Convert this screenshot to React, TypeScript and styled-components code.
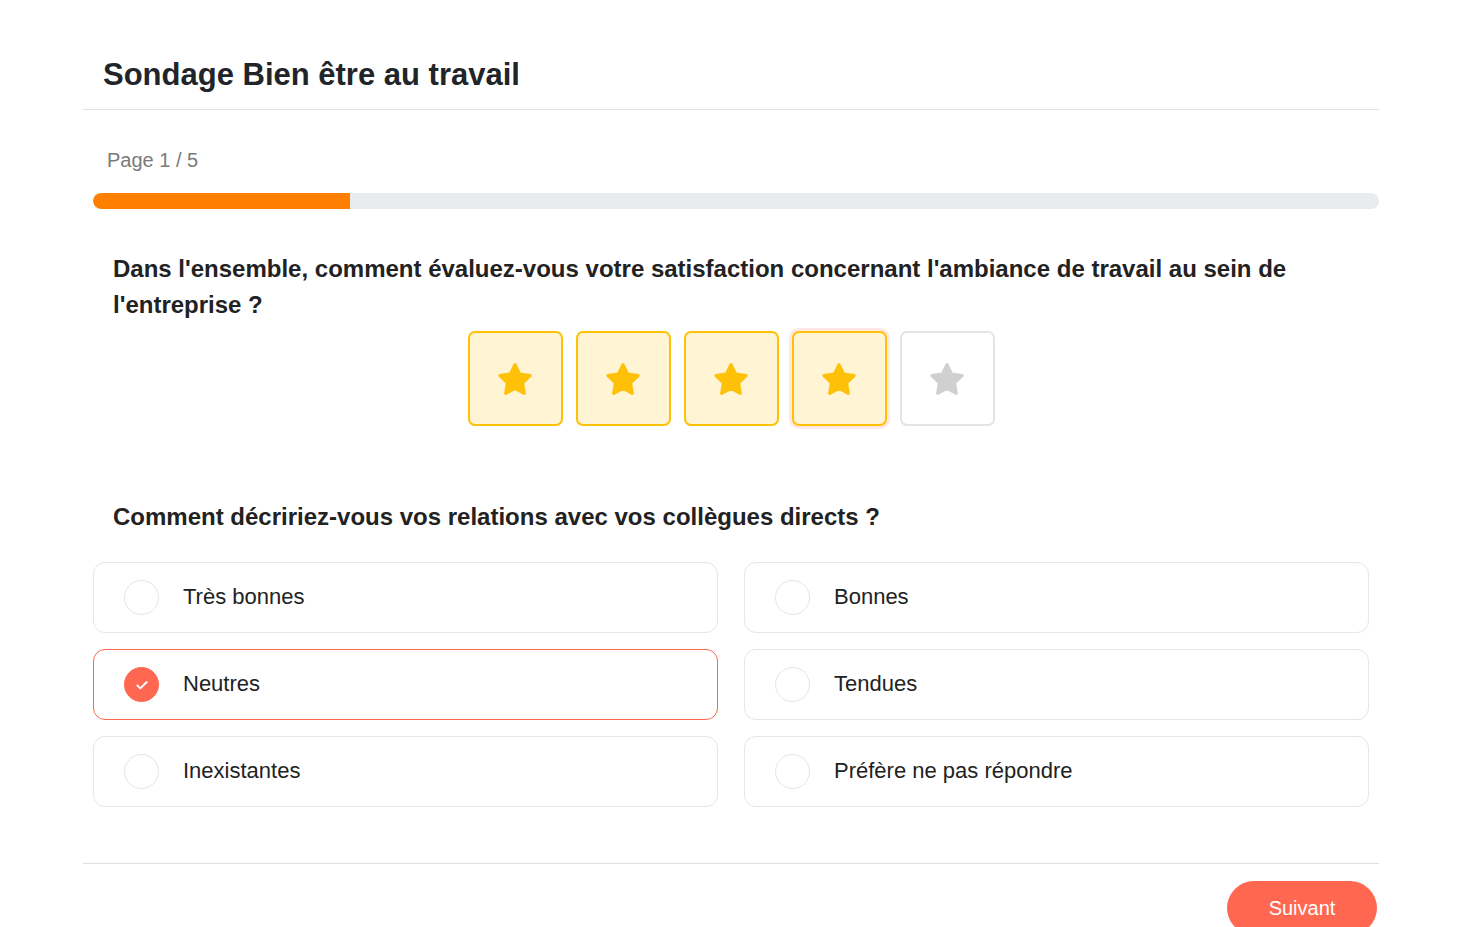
import styled, { createGlobalStyle, css } from 'styled-components';

const GlobalStyle = createGlobalStyle`
  * {
    box-sizing: border-box;
  }

  body {
    margin: 0;
    background: #ffffff;
    font-family: "Liberation Sans", Arial, sans-serif;
    color: #222222;
  }
`;

const STARS = 5;
const RATING = 4;

const options = [
  { label: 'Très bonnes', checked: false },
  { label: 'Bonnes', checked: false },
  { label: 'Neutres', checked: true },
  { label: 'Tendues', checked: false },
  { label: 'Inexistantes', checked: false },
  { label: 'Préfère ne pas répondre', checked: false },
];

const starPoints = () => {
  const cx = 12;
  const cy = 12.95;
  const outer = 10;
  const inner = 5;
  const pts: string[] = [];
  for (let i = 0; i < 10; i++) {
    const r = i % 2 === 0 ? outer : inner;
    const a = (Math.PI / 5) * i - Math.PI / 2;
    pts.push(`${(cx + r * Math.cos(a)).toFixed(2)},${(cy + r * Math.sin(a)).toFixed(2)}`);
  }
  return pts.join(' ');
};

const StarIcon = ({ color }: { color: string }) => (
  <svg width="38" height="38" viewBox="0 0 24 24">
    <polygon points={starPoints()} fill={color} stroke={color} strokeWidth="2" strokeLinejoin="round" />
  </svg>
);

const CheckIcon = () => (
  <svg width="16" height="16" viewBox="0 0 24 24" fill="none">
    <path d="M5 12.5l4.5 4.5L19 7.5" stroke="#ffffff" strokeWidth="3" strokeLinecap="round" strokeLinejoin="round" />
  </svg>
);

const App = () => {
  return (
    <>
      <GlobalStyle />
      <Page>
        <Header>
          <Title>Sondage Bien être au travail</Title>
        </Header>

        <Body>
          <PageCount>Page 1 / 5</PageCount>
          <Progress>
            <ProgressFill style={{ width: `${(1 / 5) * 100}%` }} />
          </Progress>

          <Question>
            Dans l'ensemble, comment évaluez-vous votre satisfaction concernant l'ambiance de travail au sein de
            l'entreprise ?
          </Question>
          <StarRow>
            {Array.from({ length: STARS }).map((_, i) => (
              <StarBox key={i} active={i < RATING} focused={i === RATING - 1}>
                <StarIcon color={i < RATING ? '#FFC107' : '#D0D0D0'} />
              </StarBox>
            ))}
          </StarRow>

          <Question spaced>Comment décririez-vous vos relations avec vos collègues directs ?</Question>
          <OptionGrid>
            {options.map((o) => (
              <Option key={o.label} checked={o.checked}>
                <Radio checked={o.checked}>{o.checked && <CheckIcon />}</Radio>
                <OptionLabel>{o.label}</OptionLabel>
              </Option>
            ))}
          </OptionGrid>
        </Body>

        <Footer>
          <NextButton>Suivant</NextButton>
        </Footer>
      </Page>
    </>
  );
};

export default App;

const Page = styled.div`
  width: 1296px;
  margin-left: 83px;
`;

const Header = styled.div`
  padding: 56px 20px 16px;
  border-bottom: 1px solid #e0e0e0;
`;

const Title = styled.h1`
  margin: 0;
  font-size: 31px;
  font-weight: 700;
  line-height: 37px;
  color: #212529;
`;

const Body = styled.div`
  padding: 38px 0 56px 10px;
`;

const PageCount = styled.div`
  padding-left: 14px;
  font-size: 20px;
  line-height: 24px;
  color: #7a7a7a;
`;

const Progress = styled.div`
  margin-top: 21px;
  height: 16px;
  border-radius: 8px;
  background: #e9ecef;
  overflow: hidden;
`;

const ProgressFill = styled.div`
  height: 100%;
  border-radius: 8px 0 0 8px;
  background: #ff8000;
`;

const Question = styled.h2<{ spaced?: boolean }>`
  margin: 42px 0 0;
  padding: 0 80px 0 20px;
  font-size: 24px;
  font-weight: 700;
  line-height: 36px;
  color: #222222;

  ${(props) =>
    props.spaced &&
    css`
      margin-top: 73px;
    `}
`;

const StarRow = styled.div`
  margin-top: 8px;
  margin-left: -10px;
  display: flex;
  justify-content: center;
  gap: 13px;
`;

const StarBox = styled.div<{ active?: boolean; focused?: boolean }>`
  width: 95px;
  height: 95px;
  border: 2px solid #e2e4e8;
  border-radius: 7px;
  background: #ffffff;

  display: flex;
  align-items: center;
  justify-content: center;

  cursor: pointer;

  ${(props) =>
    props.active &&
    css`
      border-color: #ffc107;
      background: #fff4d3;
    `}

  ${(props) =>
    props.focused &&
    css`
      box-shadow: 0 0 0 3px rgba(255, 110, 90, 0.16);
    `}
`;

const OptionGrid = styled.div`
  margin-top: 27px;
  margin-right: 10px;
  display: grid;
  grid-template-columns: 1fr 1fr;
  column-gap: 26px;
  row-gap: 16px;
`;

const Option = styled.div<{ checked?: boolean }>`
  height: 71px;
  padding: 0 30px;
  border: 1px solid #e6e6e6;
  border-radius: 12px;
  background: #ffffff;

  display: flex;
  align-items: center;
  gap: 24px;

  cursor: pointer;

  ${(props) =>
    props.checked &&
    css`
      border-color: #ff6750;
    `}
`;

const Radio = styled.div<{ checked?: boolean }>`
  width: 35px;
  height: 35px;
  flex-shrink: 0;
  border: 1px solid #e5e5e5;
  border-radius: 50%;

  display: flex;
  align-items: center;
  justify-content: center;

  ${(props) =>
    props.checked &&
    css`
      border-color: #ff6750;
      background: #ff6750;
    `}
`;

const OptionLabel = styled.span`
  margin-top: -2px;
  font-size: 22px;
  line-height: 26px;
  color: #222222;
`;

const Footer = styled.div`
  padding-top: 17px;
  border-top: 1px solid #e0e0e0;

  display: flex;
  justify-content: flex-end;
`;

const NextButton = styled.button`
  width: 150px;
  height: 54px;
  margin-right: 2px;
  border: none;
  border-radius: 27px;
  background: #ff6750;

  font-family: "Liberation Sans", Arial, sans-serif;
  font-size: 20px;
  color: #ffffff;

  cursor: pointer;
`;
